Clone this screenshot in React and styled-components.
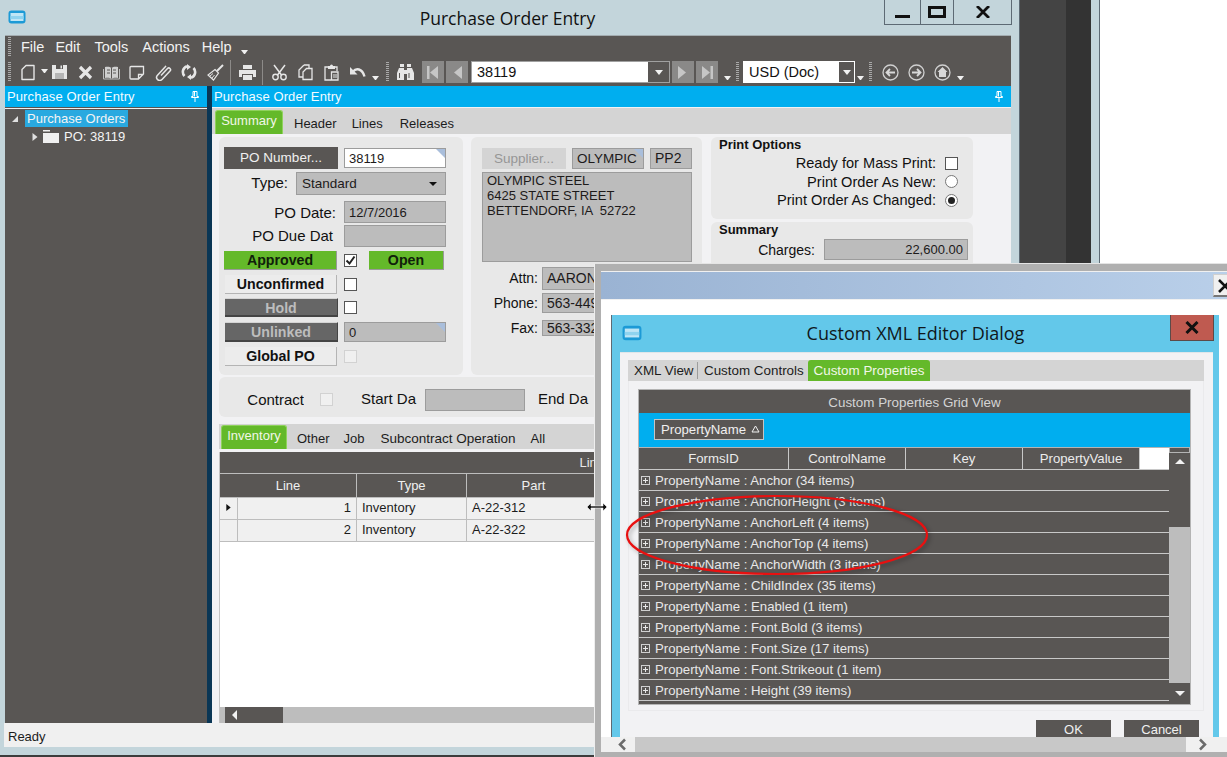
import React from 'react';
import styled, { createGlobalStyle } from 'styled-components';

const GlobalStyle = createGlobalStyle`
  html, body {
    margin: 0;
    padding: 0;
    background: #fff;
    overflow: hidden;
  }
  * {
    box-sizing: border-box;
  }
`;

const SANS = '"Liberation Sans", Arial, sans-serif';
const CAPTION = '"Open Sans", "Noto Sans", sans-serif';

const Page = styled.div`
  position: relative;
  width: 1227px;
  height: 757px;
  display: flex;
  overflow: hidden;
  font-family: ${SANS};
  font-size: 14px;
  color: #111;
`;

const MainWindow = styled.div`
  width: 1020px;
  height: 757px;
  display: flex;
  flex-direction: column;
  background: #c3d5db;
  border-right: 1px solid #5d6a74;
  border-bottom: 2px solid #3c3c3c;
`;

const TitleBar = styled.div`
  height: 35px;
  flex: none;
  display: grid;
  grid-template-columns: 1fr auto 1fr;
  padding: 0 7px 0 3px;
`;

const LogoSlot = styled.div`
  padding: 10px 0 0 5px;
`;

const WindowTitle = styled.div`
  font-family: ${CAPTION};
  font-size: 17.5px;
  line-height: 36px;
  color: #111;
`;

const WindowButtons = styled.div`
  justify-self: end;
  width: 128px;
  height: 25px;
  display: flex;
  border: 1px solid #5d6a74;
  border-top: 0;
`;

const WindowButton = styled.div`
  width: ${p => p.$w}px;
  display: flex;
  align-items: flex-start;
  justify-content: center;
  padding-top: ${p => p.$top || 0}px;
  border-right: ${p => (p.$last ? 0 : '1px solid #5d6a74')};
`;

const Shell = styled.div`
  flex: 1;
  min-height: 0;
  margin: 0 8px 8px 5px;
  display: flex;
  flex-direction: column;
  border-top: 1px solid #a3acb0;
`;

const MenuBar = styled.div`
  height: 24px;
  flex: none;
  display: flex;
  align-items: center;
  background: #595654;
  padding: 0 0 2px 3px;
  color: #f2f2f2;
  font-size: 14.5px;
`;

const Grip = styled.span`
  width: 3px;
  height: ${p => p.$h || 20}px;
  flex: none;
  margin: 0 ${p => p.$mr || 0}px 0 ${p => p.$ml || 0}px;
  background: repeating-linear-gradient(to bottom, #a9a9a9 0 1px, transparent 1px 2px);
`;

const MenuItem = styled.span`
  margin-left: ${p => p.$ml}px;
`;

const Chevron = styled.span`
  flex: none;
  width: 7px;
  height: 4px;
  margin: 0 ${p => p.$mr || 0}px ${p => p.$mb ?? 4}px ${p => p.$ml || 0}px;
  align-self: ${p => (p.$center ? 'center' : 'flex-end')};
  border-left: 3.5px solid transparent;
  border-right: 3.5px solid transparent;
  border-top: 4px solid #f0f0f0;
`;

const ToolBar = styled.div`
  height: 26px;
  flex: none;
  display: flex;
  align-items: center;
  background: #595654;
  padding: 0 0 2px 3px;
`;

const ToolButton = styled.span`
  width: 26px;
  height: 22px;
  flex: none;
  display: flex;
  align-items: center;
  justify-content: center;
`;

const ToolSep = styled.span`
  width: 1px;
  height: 25px;
  flex: none;
  margin: 0 ${p => p.$mr}px 0 ${p => p.$ml}px;
  background: #8c8a88;
`;

const NavButton = styled.span`
  width: 22px;
  height: 22px;
  flex: none;
  margin-left: ${p => p.$ml || 0}px;
  display: flex;
  align-items: center;
  justify-content: center;
  background: #8a8988;
`;

const Combo = styled.div`
  height: 22px;
  flex: none;
  width: ${p => p.$w}px;
  margin-left: ${p => p.$ml}px;
  display: flex;
  background: #fff;
  border: 1px solid ${p => (p.$plain ? '#fff' : '#a0a0a0')};
  color: #111;
  font-size: 14.5px;
  line-height: 20px;
`;

const ComboText = styled.span`
  flex: 1;
  padding-left: 5px;
`;

const ComboArrow = styled.span`
  width: ${p => p.$w}px;
  flex: none;
  display: flex;
  align-items: center;
  justify-content: center;
  background: #595654;
  &::after {
    content: '';
    border-left: 4px solid transparent;
    border-right: 4px solid transparent;
    border-top: 5px solid #f2f2f2;
  }
`;

const Panes = styled.div`
  flex: 1;
  min-height: 0;
  display: flex;
`;

const LeftPane = styled.div`
  width: 202px;
  flex: none;
  display: flex;
  flex-direction: column;
  background: #595654;
`;

const Splitter = styled.div`
  width: 5px;
  flex: none;
  background: #0a3655;
`;

const RightPane = styled.div`
  flex: 1;
  min-width: 0;
  display: flex;
  flex-direction: column;
  background: #f2f2f4;
`;

const PaneHeader = styled.div`
  height: 21px;
  flex: none;
  display: flex;
  align-items: center;
  justify-content: space-between;
  padding: 0 8px 1px 2px;
  background: #00aeef;
  color: #f4fbff;
  font-size: 13px;
  letter-spacing: 0.1px;
  margin-bottom: 1px;
`;

const Tree = styled.div`
  background: #595654;
  border-top: 1px solid #eee;
  padding: 1px 0 0 6px;
  color: #eee;
  font-size: 13px;
`;

const TreeRow = styled.div`
  height: 17px;
  display: flex;
  align-items: center;
  padding-left: ${p => p.$indent || 0}px;
  margin-bottom: 1px;
`;

const TreeLabel = styled.span`
  height: 17px;
  line-height: 17px;
  padding: 0 3px 0 2px;
  margin-left: ${p => p.$ml || 0}px;
  background: ${p => (p.$selected ? '#29a9e0' : 'transparent')};
  color: #f4f4f4;
`;

const FolderSlot = styled.span`
  display: flex;
  margin-left: 4px;
`;

const TabStrip = styled.div`
  height: ${p => p.$h}px;
  flex: none;
  display: flex;
  align-items: flex-end;
  margin: ${p => p.$m || 0};
  padding-left: ${p => p.$pl || 0}px;
  background: #d4d4d4;
  font-size: 13px;
`;

const Tab = styled.div`
  height: 24px;
  flex: none;
  margin-left: ${p => p.$ml || 0}px;
  line-height: 28px;
  font-size: ${p => p.$size || 13}px;
  color: #1c1c1c;
`;

const ActiveTab = styled.div`
  height: 24px;
  flex: none;
  width: ${p => p.$w}px;
  text-align: center;
  line-height: 20px;
  background: #64b92a;
  color: #f2f7e8;
  border: 1px solid #8fd25c;
  border-bottom: 0;
  border-radius: 3px 3px 0 0;
  box-shadow: inset 0 0 0 1px #64b92a;
`;

const Content = styled.div`
  flex: 1;
  min-height: 0;
  display: flex;
  flex-direction: column;
  padding: 3px 0 0 7px;
`;

const SummaryRow = styled.div`
  height: 238px;
  flex: none;
  display: flex;
`;

const Panel = styled.div`
  width: ${p => p.$w}px;
  height: ${p => (p.$h ? `${p.$h}px` : 'auto')};
  flex: none;
  margin: ${p => p.$m || 0};
  padding: ${p => p.$pad || 0};
  background: #e8e8e8;
  border-radius: 6px;
  display: flex;
  flex-direction: column;
`;

const FormRow = styled.div`
  height: ${p => p.$h}px;
  flex: none;
  display: flex;
  align-items: center;
  margin-top: ${p => p.$mt || 0}px;
`;

const Label = styled.span`
  width: ${p => p.$w}px;
  flex: none;
  text-align: ${p => p.$align || 'right'};
  padding-right: ${p => p.$pr || 0}px;
  margin-left: ${p => p.$ml || 0}px;
  margin-top: ${p => (p.$up ? -p.$up * 2 : 0)}px;
  white-space: nowrap;
  overflow: hidden;
  font-size: ${p => p.$size || 14}px;
`;

const DarkButton = styled.div`
  width: ${p => p.$w}px;
  height: 100%;
  flex: none;
  background: #595654;
  color: #f0f0f0;
  text-align: center;
  font-size: 13.5px;
  line-height: 22px;
`;

const Field = styled.div`
  position: relative;
  width: ${p => p.$w}px;
  height: ${p => (p.$h ? `${p.$h}px` : '100%')};
  flex: none;
  margin-left: ${p => p.$ml || 0}px;
  margin-top: ${p => p.$mt || 0}px;
  background: ${p => (p.$white ? '#fff' : '#bcbcbc')};
  border: 1px solid #9c9c9c;
  padding: 0 ${p => p.$pad || 4}px;
  font-size: ${p => p.$size || 14}px;
  line-height: ${p => p.$lh || 20}px;
  text-align: ${p => p.$align || 'left'};
  white-space: pre-wrap;
  overflow: hidden;
  color: #1d1a1a;
  ${p => p.$corner && `
    &::after {
      content: '';
      position: absolute;
      top: 0;
      right: 0;
      border-top: 9px solid #a9bedb;
      border-left: 9px solid transparent;
    }
  `}
`;

const SelectArrow = styled.span`
  position: absolute;
  right: 8px;
  top: 9px;
  border-left: 4px solid transparent;
  border-right: 4px solid transparent;
  border-top: 4px solid #111;
`;

const FlagButton = styled.div`
  width: ${p => p.$w}px;
  height: 100%;
  flex: none;
  margin-left: ${p => p.$ml || 0}px;
  text-align: center;
  font-weight: 700;
  font-size: 14.2px;
  line-height: 19px;
  ${p => p.$tone === 'green' && `
    background: #64b92a;
    color: #10200a;
    border-right: 1px solid #9a9a9a;
    border-bottom: 1px solid #9a9a9a;
  `}
  ${p => p.$tone === 'plain' && `
    background: #ececec;
    color: #111;
    border-right: 1px solid #b4b4b4;
    border-bottom: 1px solid #b4b4b4;
    margin-left: 1px;
    width: 112px;
  `}
  ${p => p.$tone === 'dark' && `
    background: #666;
    color: #bdbdbd;
    border-top: 1px solid #d4d4d4;
    border-right: 1px solid #444;
    border-bottom: 2px solid #444;
    margin-left: 1px;
    width: 113px;
  `}
`;

const CheckBox = styled.span`
  width: 13px;
  height: 13px;
  flex: none;
  margin-left: ${p => p.$ml || 0}px;
  background: ${p => (p.$disabled ? '#f0f0f0' : '#fff')};
  border: 1px solid ${p => (p.$disabled ? '#d2d2d2' : '#555')};
  display: flex;
  align-items: center;
  justify-content: center;
`;

const Radio = styled.span`
  width: 13px;
  height: 13px;
  flex: none;
  margin-left: ${p => p.$ml || 0}px;
  border-radius: 50%;
  background: #fff;
  border: 1px solid #777;
  display: flex;
  align-items: center;
  justify-content: center;
  &::after {
    content: '';
    width: 7px;
    height: 7px;
    border-radius: 50%;
    background: ${p => (p.$on ? '#222' : 'transparent')};
  }
`;

const SupplierButton = styled.div`
  width: 84px;
  height: 21px;
  flex: none;
  background: #d4d4d4;
  color: #969696;
  text-align: center;
  font-size: 13.5px;
  line-height: 21px;
`;

const GroupTitle = styled.div`
  font-weight: 700;
  font-size: 13px;
  line-height: ${p => p.$lh}px;
  margin-bottom: ${p => p.$mb}px;
  color: #111;
`;

const OptionRow = styled.div`
  height: 18.5px;
  flex: none;
  display: flex;
  align-items: center;
  justify-content: flex-end;
  padding-right: 15px;
  font-size: 14.6px;
`;

const ColumnStack = styled.div`
  display: flex;
  flex-direction: column;
  margin-left: 9px;
`;

const LineGrid = styled.div`
  flex: 1;
  min-height: 0;
  margin-top: 3px;
  display: flex;
  flex-direction: column;
  background: #fff;
  border-left: 1px solid #c4c4c4;
  font-size: 13px;
`;

const LineTitle = styled.div`
  height: 22px;
  flex: none;
  background: #595654;
  border-bottom: 1px solid #bdbdbd;
  color: #e8e8e8;
  text-align: center;
  line-height: 22px;
  padding-right: 41px;
`;

const LineRow = styled.div`
  height: ${p => p.$h || 22}px;
  flex: none;
  display: flex;
  background: ${p => (p.$head ? '#595654' : '#f0f0f0')};
  color: ${p => (p.$head ? '#f0f0f0' : '#1c1c1c')};
  border-bottom: 1px solid #bdbdbd;
  line-height: 21px;
`;

const LineCell = styled.div`
  width: ${p => p.$w}px;
  flex: none;
  padding: 0 5px ${p => (p.$head ? 0 : 2)}px;
  border-right: 1px solid #bdbdbd;
  display: flex;
  align-items: center;
  justify-content: ${p => (p.$align === 'right' ? 'flex-end' : p.$align === 'center' ? 'center' : 'flex-start')};
`;

const LineSpacer = styled.div`
  flex: 1;
`;

const LineScroll = styled.div`
  height: 16px;
  flex: none;
  display: flex;
  background: #bdbdbd;
`;

const ScrollKnob = styled.div`
  width: 58px;
  margin-left: 5px;
  background: #595654;
  display: flex;
  align-items: center;
  padding-left: 7px;
  &::after {
    content: '';
    border-top: 5px solid transparent;
    border-bottom: 5px solid transparent;
    border-right: 5px solid #f2f2f2;
  }
`;

const StatusBar = styled.div`
  height: 24px;
  flex: none;
  margin-left: -1px;
  background: #f0f0f0;
  padding-left: 4px;
  font-size: 13px;
  line-height: 27px;
  color: #1c1c1c;
`;

const DarkStrip = styled.div`
  width: ${p => p.$w}px;
  flex: none;
  background: ${p => p.$bg};
`;

const SideEdge = styled.div`
  width: 9px;
  flex: none;
  background: #c3d5db;
  border-right: 1px solid #5d6a74;
`;

const Dialog = styled.div`
  position: absolute;
  left: 594px;
  top: 263px;
  right: 0;
  bottom: 0;
  display: flex;
  flex-direction: column;
  background: #b0b0b0;
  padding: 7px 0 5px 6px;
  border-top: 1px solid #e4e4e4;
  border-left: 1px solid #eee;
  overflow: hidden;
`;

const DialogCaption = styled.div`
  height: 29px;
  flex: none;
  display: flex;
  justify-content: flex-end;
  align-items: center;
  background: linear-gradient(to right, #9ab3d3, #b9cfe9);
  border-top: 1px solid #f0f0f0;
  border-bottom: 1px solid #f0f0f0;
`;

const CaptionClose = styled.div`
  width: 20px;
  height: 23px;
  flex: none;
  margin-right: -6px;
  background: #f0f0f0;
  border: 1px solid #d0d0d0;
  border-bottom: 2px solid #777;
  padding: 3px 0 0 4px;
`;

const DialogClient = styled.div`
  flex: 1;
  min-height: 0;
  display: flex;
  flex-direction: column;
  background: #fff;
  padding: 15px 8px 0 10px;
`;

const XmlEditor = styled.div`
  flex: 1;
  min-height: 0;
  display: flex;
  flex-direction: column;
  background: #63c8ea;
  border-left: 1px solid #5d6a74;
  overflow: hidden;
`;

const EditorTitle = styled.div`
  height: 37px;
  flex: none;
  display: grid;
  grid-template-columns: 1fr auto 1fr;
`;

const EditorLogo = styled.div`
  padding: 10px 0 0 10px;
`;

const EditorText = styled.div`
  font-family: ${CAPTION};
  font-size: 18px;
  line-height: 36px;
  color: #10181c;
`;

const EditorClose = styled.div`
  justify-self: end;
  width: 44px;
  height: 26px;
  margin-right: 5px;
  display: flex;
  align-items: center;
  justify-content: center;
  background: #bf5a50;
  border: 1px solid #5c4a48;
  border-top: 0;
`;

const EditorBody = styled.div`
  flex: 1;
  min-height: 0;
  margin: 0 6px 0 8px;
  padding: 7px 9px 0 8px;
  background: #f2f2f4;
  border-top: 1px solid #dfe6ea;
  display: flex;
  flex-direction: column;
`;

const EditorTabs = styled.div`
  height: 21px;
  flex: none;
  display: flex;
  align-items: stretch;
  background: #d4d4d4;
  font-size: 13.4px;
  line-height: 21px;
  padding-left: 6px;
  color: #1c1c1c;
`;

const EditorTab = styled.div`
  width: ${p => p.$w}px;
  flex: none;
  margin-right: ${p => p.$mr || 0}px;
  border-right: ${p => (p.$sep ? '1px solid #9c9c9c' : 0)};
  margin-top: 2px;
  margin-bottom: 2px;
  line-height: 17px;
  white-space: nowrap;
`;

const EditorActiveTab = styled.div`
  width: 122px;
  flex: none;
  text-align: center;
  background: #64b92a;
  color: #f2f7e8;
  border-radius: 3px 3px 0 0;
`;

const EditorFrame = styled.div`
  height: 330px;
  flex: none;
  padding: 8px 12px 0 9px;
  border: 1px solid #eaeaec;
  border-top: 0;
`;

const PropsGrid = styled.div`
  height: 316px;
  display: flex;
  flex-direction: column;
  background: #595654;
  border: 1px solid #b4b4b4;
  font-size: 13.2px;
  color: #e8e8e8;
`;

const PropsTitle = styled.div`
  height: 23px;
  flex: none;
  text-align: center;
  line-height: 25px;
  font-size: 13.4px;
  color: #d4d4d4;
`;

const GroupBar = styled.div`
  height: 34px;
  flex: none;
  display: flex;
  align-items: center;
  padding: 0 0 2px 15px;
  background: #00aeef;
`;

const GroupChip = styled.div`
  width: 110px;
  height: 21px;
  display: flex;
  align-items: center;
  justify-content: space-between;
  padding: 0 3px 0 6px;
  background: #595654;
  border: 1px solid #c4c4c4;
  color: #f0f0f0;
`;

const PropsBody = styled.div`
  flex: 1;
  min-height: 0;
  display: flex;
  border-top: 1px solid #b4b4b4;
`;

const PropsColumns = styled.div`
  width: 530px;
  flex: none;
`;

const ColumnRow = styled.div`
  height: 22px;
  display: flex;
  border-bottom: 1px solid #c8c8c8;
`;

const ColumnHead = styled.div`
  width: ${p => p.$w}px;
  flex: none;
  text-align: center;
  line-height: 21px;
  color: #ececec;
  background: ${p => (p.$blank ? '#fff' : 'transparent')};
  border-right: ${p => (p.$blank ? 0 : '1px solid #c8c8c8')};
`;

const PropRow = styled.div`
  height: 21px;
  display: flex;
  align-items: center;
  padding-left: 2px;
  border-bottom: 1px solid #c8c8c8;
  white-space: nowrap;
`;

const Expander = styled.span`
  position: relative;
  width: 9px;
  height: 9px;
  flex: none;
  margin-right: 5px;
  border: 1px solid #d0d0d0;
  &::before {
    content: '';
    position: absolute;
    left: 1px;
    right: 1px;
    top: 3px;
    height: 1px;
    background: #e8e8e8;
  }
  &::after {
    content: '';
    position: absolute;
    top: 1px;
    bottom: 1px;
    left: 3px;
    width: 1px;
    background: #e8e8e8;
  }
`;

const PropsScroll = styled.div`
  flex: 1;
  display: flex;
  flex-direction: column;
`;

const ScrollCap = styled.div`
  height: 5px;
  flex: none;
  border: 1px solid #b4b4b4;
  border-top: 0;
`;

const ScrollStep = styled.div`
  height: ${p => p.$h}px;
  flex: none;
  display: flex;
  align-items: ${p => (p.$down ? 'center' : 'flex-start')};
  justify-content: center;
  padding-top: ${p => (p.$down ? 0 : 6)}px;
  &::after {
    content: '';
    border-left: 5px solid transparent;
    border-right: 5px solid transparent;
    ${p => (p.$down ? 'border-top: 5px solid #f2f2f2;' : 'border-bottom: 5px solid #f2f2f2;')}
  }
`;

const ScrollThumb = styled.div`
  height: 156px;
  flex: none;
  background: #bdbdbd;
`;

const ScrollRest = styled.div`
  flex: 1;
`;

const EditorActions = styled.div`
  flex: none;
  display: flex;
  justify-content: flex-end;
  gap: 13px;
  padding: 9px 5px 0 0;
`;

const ActionButton = styled.div`
  width: 75px;
  height: 23px;
  background: #595654;
  color: #f0f0f0;
  text-align: center;
  font-size: 13px;
  line-height: 20px;
`;

const FrameScroll = styled.div`
  height: 15px;
  flex: none;
  display: flex;
  align-items: center;
  background: #f0f0f0;
`;

const FrameTrack = styled.div`
  flex: 1;
  height: 15px;
  background: #c8c8c8;
`;

const FrameArrow = styled.div`
  width: ${p => p.$w}px;
  flex: none;
  display: flex;
  justify-content: ${p => (p.$left ? 'flex-end' : 'flex-start')};
  padding: 0 8px 0 12px;
`;

const Overlay = styled.svg`
  position: absolute;
  left: ${p => p.$x}px;
  top: ${p => p.$y}px;
  pointer-events: none;
  overflow: visible;
`;

const ICON = '#e6e6e6';

const Logo = ({ w = 18, h = 14 }) => (
  <svg width={w} height={h} viewBox="0 0 18 14">
    <rect x="0.5" y="0.5" width="17" height="13" rx="3" fill="#1c9ad6" />
    <rect x="2.5" y="3" width="13" height="8" fill="#bfe6f6" />
    <rect x="2.5" y="6" width="13" height="3" fill="#8fd3ef" />
  </svg>
);

const Pin = () => (
  <svg width="8" height="11" viewBox="0 0 8 11">
    <path d="M2 .5h4v5h1.500v1h-7v-1H2zM3.500 1v4.500M4 6.500V11" fill="none" stroke="#fff" strokeWidth="1" />
  </svg>
);

const DocIcon = () => (
  <svg width="16" height="17" viewBox="0 0 16 17">
    <path d="M6 1.500h8v14H2v-10z" fill="none" stroke={ICON} strokeWidth="1.400" strokeLinejoin="round" />
  </svg>
);

const SaveIcon = () => (
  <svg width="17" height="16" viewBox="0 0 17 16">
    <path d="M1 1h15v14H1z" fill={ICON} />
    <path d="M5 1h7v4H5z" fill="#595654" />
    <path d="M9.500 1.500h1.500v3H9.500z" fill={ICON} />
    <path d="M4 9h9v6H4z" fill="#b5b5b5" />
  </svg>
);

const CloseIcon = () => (
  <svg width="15" height="15" viewBox="0 0 15 15">
    <path d="M2 2l11 11M13 2L2 13" stroke={ICON} strokeWidth="3.200" fill="none" />
  </svg>
);

const BookIcon = () => (
  <svg width="17" height="15" viewBox="0 0 17 15">
    <path d="M8.500 3C7 1.500 4 1.500 2 2v11c2-.5 5-.5 6.500 1 1.500-1.500 4.500-1.500 6.500-1V2c-2-.5-5-.5-6.500 1z" fill="#cfcfcf" />
    <path d="M8.500 3v11M4 5h3M4 8h3M10 5h3M10 8h3" stroke="#595654" strokeWidth="1" fill="none" />
    <path d="M.5 4v10h16V4" stroke="#bdbdbd" strokeWidth="1" fill="none" />
  </svg>
);

const NoteIcon = () => (
  <svg width="16" height="15" viewBox="0 0 16 15">
    <path d="M2 1.500h12.500V9l-5 5H2a1 1 0 0 1-1-1V2.500a1 1 0 0 1 1-1zM14.500 9.500h-5v4.500" fill="none" stroke={ICON} strokeWidth="1.300" />
  </svg>
);

const ClipIcon = () => (
  <svg width="17" height="17" viewBox="0 0 17 17">
    <path d="M6 11.500l6.500-7a1.700 1.700 0 0 1 2.500 2.500l-8 8.500a3 3 0 0 1-4.500-4.200L11 2a2 2 0 0 0-.5.500" fill="none" stroke={ICON} strokeWidth="1.500" />
  </svg>
);

const RefreshIcon = () => (
  <svg width="16" height="16" viewBox="0 0 16 16">
    <path d="M3.500 12A6 6 0 0 1 6 2.200M12.500 4A6 6 0 0 1 10 13.800" fill="none" stroke={ICON} strokeWidth="2.600" />
    <path d="M6 0l4 3-4 3zM10 16l-4-3 4-3z" fill={ICON} />
  </svg>
);

const BroomIcon = () => (
  <svg width="17" height="17" viewBox="0 0 17 17">
    <path d="M16 1l-6 6" stroke={ICON} strokeWidth="2" fill="none" />
    <path d="M8 5.500l3.500 3.500-5 7-5.500-5z" fill="none" stroke={ICON} strokeWidth="1.200" />
    <path d="M3 12l3-2.500M5 14l2.500-3" stroke={ICON} strokeWidth="1" fill="none" />
  </svg>
);

const PrinterIcon = () => (
  <svg width="17" height="15" viewBox="0 0 17 15">
    <path d="M4 0h9v4H4z" fill={ICON} />
    <path d="M0 5h17v7h-3V9H3v3H0z" fill={ICON} />
    <path d="M4 10h9v5H4z" fill={ICON} />
  </svg>
);

const ScissorsIcon = () => (
  <svg width="17" height="17" viewBox="0 0 17 17">
    <path d="M3 1l7.500 10M14 1L6.500 11" stroke={ICON} strokeWidth="1.500" fill="none" />
    <circle cx="4.500" cy="13" r="2.700" fill="none" stroke={ICON} strokeWidth="1.400" />
    <circle cx="12.500" cy="13" r="2.700" fill="none" stroke={ICON} strokeWidth="1.400" />
  </svg>
);

const CopyIcon = () => (
  <svg width="15" height="17" viewBox="0 0 15 17">
    <path d="M6 1h5v3M6 1L1 6v7h4" fill="none" stroke={ICON} strokeWidth="1.300" />
    <path d="M8.500 4.500H14v11H5V8z" fill="none" stroke={ICON} strokeWidth="1.300" />
  </svg>
);

const PasteIcon = () => (
  <svg width="15" height="17" viewBox="0 0 15 17">
    <path d="M4 3H1v13h6M10 3h3v4" fill="none" stroke={ICON} strokeWidth="1.300" />
    <path d="M4 2h2a1.500 1.500 0 0 1 3 0h2v3H4z" fill={ICON} />
    <path d="M7.500 8H14v8H7.500z" fill="none" stroke={ICON} strokeWidth="1.300" />
    <path d="M9 11h4M9 13h4" stroke={ICON} strokeWidth="1" />
  </svg>
);

const UndoIcon = () => (
  <svg width="17" height="12" viewBox="0 0 17 12">
    <path d="M4 5.500C7 2 13 2 15.500 10.500" fill="none" stroke={ICON} strokeWidth="2.400" />
    <path d="M1 1v7.500h7.500z" fill={ICON} />
  </svg>
);

const BinocularsIcon = () => (
  <svg width="17" height="16" viewBox="0 0 17 16">
    <path d="M3 0h4v3H3zM10 0h4v3h-4zM2 4h5v12H0V9zM10 4h5l2 5v7h-7zM7 6h3v4H7z" fill={ICON} />
    <path d="M2.500 9v5M12 9v5" stroke="#595654" strokeWidth="1" />
  </svg>
);

const NavGlyph = ({ dir, bar }) => (
  <svg width="14" height="15" viewBox="0 0 14 15">
    <path d={dir === 'left' ? 'M12 1v13L4 7.500z' : 'M2 1v13l8-6.500z'} fill="#c6c6c6" />
    {bar && <path d={dir === 'left' ? 'M1 1h2.500v13H1z' : 'M10.500 1H13v13h-2.500z'} fill="#c6c6c6" />}
  </svg>
);

const CircleIcon = ({ kind }) => (
  <svg width="17" height="17" viewBox="0 0 17 17">
    <circle cx="8.500" cy="8.500" r="7.500" fill="none" stroke="#d0d0d0" strokeWidth="1.300" />
    {kind === 'left' && <path d="M13 8.500H5M8 5L4.500 8.500 8 12" fill="none" stroke="#d8d8d8" strokeWidth="1.800" />}
    {kind === 'right' && <path d="M4 8.500h8M9 5l3.500 3.500L9 12" fill="none" stroke="#d8d8d8" strokeWidth="1.800" />}
    {kind === 'home' && <path d="M8.500 3L3.500 8h1.500v5h7V8h1.500z" fill="#d8d8d8" />}
  </svg>
);

const Tri = ({ dir = 'right', color = '#e0e0e0', size = 8 }) => (
  <svg width={size} height={size} viewBox="0 0 8 8">
    {dir === 'right' && <path d="M1.500 0l5 4-5 4z" fill={color} />}
    {dir === 'corner' && <path d="M7 1v6H1z" fill={color} />}
  </svg>
);

const Folder = () => (
  <svg width="16" height="13" viewBox="0 0 16 13">
    <path d="M0 0h7v1.500H0z" fill="#f0f0f0" />
    <path d="M0 3h16v10H0z" fill="#f0f0f0" />
  </svg>
);

const Tick = () => (
  <svg width="11" height="11" viewBox="0 0 11 11">
    <path d="M1.500 5.500l3 3 5-7" fill="none" stroke="#222" strokeWidth="2" />
  </svg>
);

const SortUp = () => (
  <svg width="9" height="8" viewBox="0 0 9 8">
    <path d="M4.500 1L8 7H1z" fill="none" stroke="#f0f0f0" strokeWidth="1" />
  </svg>
);

const Angle = ({ left }) => (
  <svg width="10" height="13" viewBox="0 0 10 13">
    <path d={left ? 'M8 1.500L3 6.500l5 5' : 'M2 1.500l5 5-5 5'} fill="none" stroke="#6b6b6b" strokeWidth="2.500" />
  </svg>
);

const propertyRows = [
  'Anchor (34 items)',
  'AnchorHeight (3 items)',
  'AnchorLeft (4 items)',
  'AnchorTop (4 items)',
  'AnchorWidth (3 items)',
  'ChildIndex (35 items)',
  'Enabled (1 item)',
  'Font.Bold (3 items)',
  'Font.Size (17 items)',
  'Font.Strikeout (1 item)',
  'Height (39 items)',
];

const App = () => {
  return (
    <Page>
      <GlobalStyle />
      <MainWindow>
        <TitleBar>
          <LogoSlot><Logo /></LogoSlot>
          <WindowTitle>Purchase Order Entry</WindowTitle>
          <WindowButtons>
            <WindowButton $w={36} $top={15}>
              <svg width="15" height="3"><rect width="15" height="3" fill="#111" /></svg>
            </WindowButton>
            <WindowButton $w={33} $top={6}>
              <svg width="18" height="12"><rect x="1.500" y="1.500" width="15" height="9" fill="none" stroke="#111" strokeWidth="3" /></svg>
            </WindowButton>
            <WindowButton $w={57} $top={6} $last>
              <svg width="14" height="12"><path d="M1 0l12 12M13 0L1 12" stroke="#111" strokeWidth="2.800" /></svg>
            </WindowButton>
          </WindowButtons>
        </TitleBar>

        <Shell>
          <MenuBar>
            <Grip />
            <MenuItem $ml={10}>File</MenuItem>
            <MenuItem $ml={11}>Edit</MenuItem>
            <MenuItem $ml={14}>Tools</MenuItem>
            <MenuItem $ml={14}>Actions</MenuItem>
            <MenuItem $ml={12}>Help</MenuItem>
            <Chevron $ml={9} />
          </MenuBar>

          <ToolBar>
            <Grip $mr={4} />
            <ToolButton><DocIcon /></ToolButton>
            <Chevron $mr={-2} $center $mb={3} />
            <ToolButton><SaveIcon /></ToolButton>
            <ToolButton><CloseIcon /></ToolButton>
            <ToolButton><BookIcon /></ToolButton>
            <ToolButton><NoteIcon /></ToolButton>
            <ToolButton><ClipIcon /></ToolButton>
            <ToolButton><RefreshIcon /></ToolButton>
            <ToolButton><BroomIcon /></ToolButton>
            <ToolSep $ml={2} $mr={3} />
            <ToolButton><PrinterIcon /></ToolButton>
            <ToolSep $ml={2} $mr={3} />
            <ToolButton><ScissorsIcon /></ToolButton>
            <ToolButton><CopyIcon /></ToolButton>
            <ToolButton><PasteIcon /></ToolButton>
            <ToolButton><UndoIcon /></ToolButton>
            <Chevron $ml={2} />
            <Grip $ml={7} $mr={3} />
            <ToolButton><BinocularsIcon /></ToolButton>
            <NavButton $ml={4}><NavGlyph dir="left" bar /></NavButton>
            <NavButton $ml={2}><NavGlyph dir="left" /></NavButton>
            <Combo $w={199} $ml={3}>
              <ComboText>38119</ComboText>
              <ComboArrow $w={21} />
            </Combo>
            <NavButton $ml={2}><NavGlyph dir="right" /></NavButton>
            <NavButton $ml={2}><NavGlyph dir="right" bar /></NavButton>
            <Chevron $ml={6} />
            <Grip $ml={5} />
            <Combo $w={112} $ml={4} $plain>
              <ComboText>USD (Doc)</ComboText>
              <ComboArrow $w={15} />
            </Combo>
            <Chevron $ml={2} />
            <Grip $ml={5} $mr={5} />
            <ToolButton><CircleIcon kind="left" /></ToolButton>
            <ToolButton><CircleIcon kind="right" /></ToolButton>
            <ToolButton><CircleIcon kind="home" /></ToolButton>
            <Chevron $ml={2} />
          </ToolBar>

          <Panes>
            <LeftPane>
              <PaneHeader>
                <span>Purchase Order Entry</span>
                <Pin />
              </PaneHeader>
              <Tree>
                <TreeRow>
                  <Tri dir="corner" size={8} />
                  <TreeLabel $selected $ml={6}>Purchase Orders</TreeLabel>
                </TreeRow>
                <TreeRow $indent={20}>
                  <Tri dir="right" size={8} />
                  <FolderSlot><Folder /></FolderSlot>
                  <TreeLabel $ml={3}>PO: 38119</TreeLabel>
                </TreeRow>
              </Tree>
            </LeftPane>

            <Splitter />

            <RightPane>
              <PaneHeader>
                <span>Purchase Order Entry</span>
                <Pin />
              </PaneHeader>
              <TabStrip $h={26} $pl={3}>
                <ActiveTab $w={68}>Summary</ActiveTab>
                <Tab $ml={11}>Header</Tab>
                <Tab $ml={15}>Lines</Tab>
                <Tab $ml={17}>Releases</Tab>
              </TabStrip>

              <Content>
                <SummaryRow>
                  <Panel $w={244} $pad="10px 0 0 5px">
                    <FormRow $h={22}>
                      <DarkButton $w={114}>PO Number...</DarkButton>
                      <Field $w={102} $h={20} $ml={6} $white $corner $lh={19} $size={13}>38119</Field>
                    </FormRow>
                    <FormRow $h={23} $mt={3}>
                      <Label $w={64} $up={1} $size={15}>Type:</Label>
                      <Field $w={150} $ml={8} $pad={5} $lh={21} $size={13.5}>Standard<SelectArrow /></Field>
                    </FormRow>
                    <FormRow $h={22} $mt={6}>
                      <Label $w={112} $size={15}>PO Date:</Label>
                      <Field $w={102} $ml={8} $size={13} $lh={21}>12/7/2016</Field>
                    </FormRow>
                    <FormRow $h={22} $mt={2}>
                      <Label $w={112} $up={1} $size={15} $pr={3}>PO Due Dat</Label>
                      <Field $w={102} $ml={8} />
                    </FormRow>
                    <FormRow $h={19} $mt={4}>
                      <FlagButton $tone="green" $w={113}>Approved</FlagButton>
                      <CheckBox $ml={7}><Tick /></CheckBox>
                      <FlagButton $tone="green" $w={75} $ml={12}>Open</FlagButton>
                    </FormRow>
                    <FormRow $h={19} $mt={5}>
                      <FlagButton $tone="plain">Unconfirmed</FlagButton>
                      <CheckBox $ml={7} />
                    </FormRow>
                    <FormRow $h={19} $mt={4}>
                      <FlagButton $tone="dark">Hold</FlagButton>
                      <CheckBox $ml={6} />
                    </FormRow>
                    <FormRow $h={20} $mt={5}>
                      <FlagButton $tone="dark">Unlinked</FlagButton>
                      <Field $w={102} $ml={6} $corner $lh={20} $size={13}>0</Field>
                    </FormRow>
                    <FormRow $h={19} $mt={5}>
                      <FlagButton $tone="plain">Global PO</FlagButton>
                      <CheckBox $ml={7} $disabled />
                    </FormRow>
                  </Panel>

                  <Panel $w={231} $m="0 0 0 8px" $pad="11px 10px 0 11px">
                    <FormRow $h={21}>
                      <SupplierButton>Supplier...</SupplierButton>
                      <Field $w={72} $ml={6} $corner $lh={19} $size={13.5}>OLYMPIC</Field>
                      <Field $w={42} $ml={6} $lh={19}>PP2</Field>
                    </FormRow>
                    <Field $w={210} $h={90} $mt={3} $lh={15} $size={13}>{'OLYMPIC STEEL\n6425 STATE STREET\nBETTENDORF, IA  52722'}</Field>
                    <FormRow $h={23} $mt={5}>
                      <Label $w={58} $pr={2} $up={1}>Attn:</Label>
                      <Field $w={150} $ml={2} $lh={21}>AARON</Field>
                    </FormRow>
                    <FormRow $h={20} $mt={3}>
                      <Label $w={58} $pr={2}>Phone:</Label>
                      <Field $w={150} $ml={2} $pad={4} $lh={19}>563-449</Field>
                    </FormRow>
                    <FormRow $h={16} $mt={7}>
                      <Label $w={58} $pr={2}>Fax:</Label>
                      <Field $w={150} $ml={2} $pad={4} $lh={14}>563-332</Field>
                    </FormRow>
                  </Panel>

                  <ColumnStack>
                    <Panel $w={262} $h={82} $pad="0 0 0 8px">
                      <GroupTitle $lh={16} $mb={1}>Print Options</GroupTitle>
                      <OptionRow>
                        Ready for Mass Print:
                        <CheckBox $ml={9} />
                      </OptionRow>
                      <OptionRow>
                        Print Order As New:
                        <Radio $ml={9} />
                      </OptionRow>
                      <OptionRow>
                        Print Order As Changed:
                        <Radio $ml={9} $on />
                      </OptionRow>
                    </Panel>
                    <Panel $w={262} $h={153} $m="3px 0 0 0" $pad="0 0 0 8px">
                      <GroupTitle $lh={15} $mb={2}>Summary</GroupTitle>
                      <FormRow $h={21}>
                        <Label $w={96}>Charges:</Label>
                        <Field $w={144} $ml={9} $align="right" $lh={20} $size={13}>22,600.00</Field>
                      </FormRow>
                    </Panel>
                  </ColumnStack>
                </SummaryRow>

                <Panel $w={770} $h={40} $m="2px 0 0 0" $pad="5px 0 0 0">
                  <FormRow $h={35}>
                    <Label $w={85} $size={15}>Contract</Label>
                    <CheckBox $ml={16} $disabled />
                    <Label $w={60} $align="left" $ml={28} $up={1} $size={15}>Start Da</Label>
                    <Field $w={100} $h={22} $ml={4} />
                    <Label $w={60} $align="left" $ml={13} $up={1} $size={15}>End Da</Label>
                  </FormRow>
                </Panel>

                <TabStrip $h={25} $m="7px 0 0 0" $pl={2}>
                  <ActiveTab $w={66}>Inventory</ActiveTab>
                  <Tab $ml={10}>Other</Tab>
                  <Tab $ml={14}>Job</Tab>
                  <Tab $ml={16} $size={13.5}>Subcontract Operation</Tab>
                  <Tab $ml={15}>All</Tab>
                </TabStrip>

                <LineGrid>
                  <LineTitle>Lines</LineTitle>
                  <LineRow $head $h={24}>
                    <LineCell $head $w={137} $align="center">Line</LineCell>
                    <LineCell $head $w={110} $align="center">Type</LineCell>
                    <LineCell $head $w={134} $align="center">Part</LineCell>
                  </LineRow>
                  <LineRow>
                    <LineCell $w={18} $align="center"><Tri color="#111" size={11} /></LineCell>
                    <LineCell $w={119} $align="right">1</LineCell>
                    <LineCell $w={110}>Inventory</LineCell>
                    <LineCell $w={134}>A-22-312</LineCell>
                  </LineRow>
                  <LineRow>
                    <LineCell $w={18} />
                    <LineCell $w={119} $align="right">2</LineCell>
                    <LineCell $w={110}>Inventory</LineCell>
                    <LineCell $w={134}>A-22-322</LineCell>
                  </LineRow>
                  <LineSpacer />
                  <LineScroll><ScrollKnob /></LineScroll>
                </LineGrid>
              </Content>
            </RightPane>
          </Panes>

          <StatusBar>Ready</StatusBar>
        </Shell>
      </MainWindow>

      <DarkStrip $w={46} $bg="#444444" />
      <DarkStrip $w={25} $bg="#333333" />
      <SideEdge />

      <Dialog>
        <DialogCaption>
          <CaptionClose>
            <svg width="16" height="16" viewBox="0 0 16 16">
              <path d="M1 2l12 12M13 2L1 14" stroke="#111" strokeWidth="2.600" />
            </svg>
          </CaptionClose>
        </DialogCaption>
        <DialogClient>
          <XmlEditor>
            <EditorTitle>
              <EditorLogo><Logo w={20} h={16} /></EditorLogo>
              <EditorText>Custom XML Editor Dialog</EditorText>
              <EditorClose>
                <svg width="14" height="13"><path d="M1.500 1l11 11M12.500 1l-11 11" stroke="#111" strokeWidth="3" /></svg>
              </EditorClose>
            </EditorTitle>
            <EditorBody>
              <EditorTabs>
                <EditorTab $sep $w={64} $mr={6}>XML View</EditorTab>
                <EditorTab $w={104}>Custom Controls</EditorTab>
                <EditorActiveTab>Custom Properties</EditorActiveTab>
              </EditorTabs>
              <EditorFrame>
                <PropsGrid>
                  <PropsTitle>Custom Properties Grid View</PropsTitle>
                  <GroupBar>
                    <GroupChip>PropertyName <SortUp /></GroupChip>
                  </GroupBar>
                  <PropsBody>
                    <PropsColumns>
                      <ColumnRow>
                        <ColumnHead $w={150}>FormsID</ColumnHead>
                        <ColumnHead $w={117}>ControlName</ColumnHead>
                        <ColumnHead $w={117}>Key</ColumnHead>
                        <ColumnHead $w={117}>PropertyValue</ColumnHead>
                        <ColumnHead $w={29} $blank />
                      </ColumnRow>
                      {propertyRows.map(row => (
                        <PropRow key={row}>
                          <Expander />
                          PropertyName : {row}
                        </PropRow>
                      ))}
                    </PropsColumns>
                    <PropsScroll>
                      <ScrollCap />
                      <ScrollStep $h={74} />
                      <ScrollThumb />
                      <ScrollStep $h={21} $down />
                      <ScrollRest />
                    </PropsScroll>
                  </PropsBody>
                </PropsGrid>
              </EditorFrame>
              <EditorActions>
                <ActionButton>OK</ActionButton>
                <ActionButton>Cancel</ActionButton>
              </EditorActions>
            </EditorBody>
          </XmlEditor>
        </DialogClient>
        <FrameScroll>
          <FrameArrow $w={34} $left><Angle left /></FrameArrow>
          <FrameTrack />
          <FrameArrow $w={41}><Angle /></FrameArrow>
        </FrameScroll>
      </Dialog>

      <Overlay $x={620} $y={490} width="315" height="92" viewBox="0 0 315 92">
        <ellipse cx="157" cy="45" rx="150" ry="39" fill="none" stroke="#e81010" strokeWidth="2.200" style={{ filter: 'drop-shadow(2px 2px 2px rgba(0,0,0,.3))' }} />
      </Overlay>

      <Overlay $x={586} $y={501} width="22" height="12" viewBox="0 0 22 12">
        <path d="M1 6l4-4v3h12V2l4 4-4 4V7H5v3z" fill="#111" stroke="#fff" strokeWidth="0.600" />
      </Overlay>
    </Page>
  );
};

export default App;
